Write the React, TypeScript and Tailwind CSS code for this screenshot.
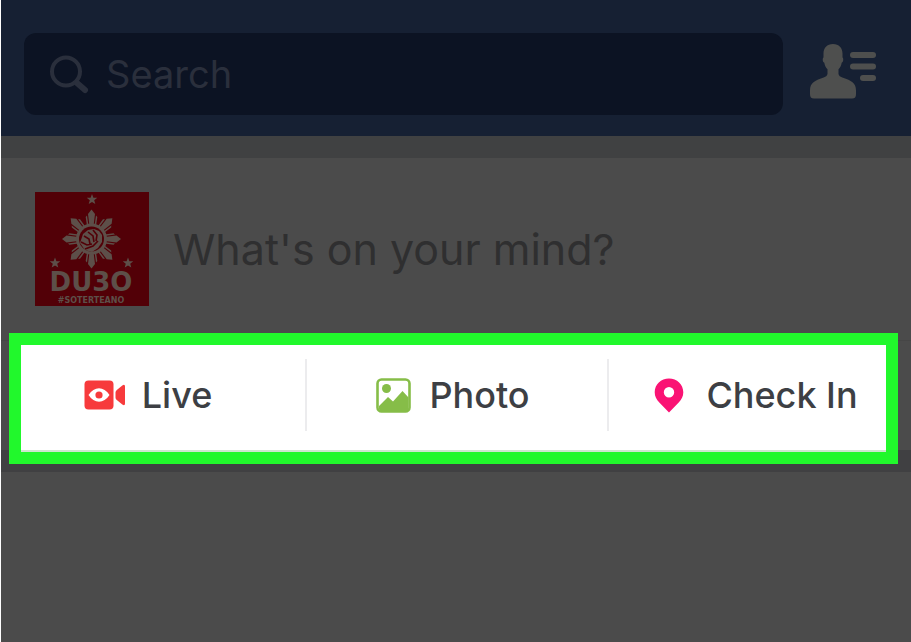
import React from "react";

function ContactsIcon() {
  return (
    <svg viewBox="0 0 66 56" className="h-14 w-[66px]" fill="#4e4f4e" aria-hidden="true">
      <path d="M23 1c-6 0-9.500 4-9.500 9.500v4c-1.200.6-1 4.500.8 5.200.5 2.800 1.500 5 3.200 6.500v4.500c0 2-2 3-4.500 4C5 37.500 0 39.500 0 47.500V51c0 3 1 4.500 4 4.500h38c3 0 4-1.500 4-4.500v-3.500c0-8-5-10-13-12.800-2.500-1-4.500-2-4.500-4v-4.500c1.700-1.500 2.700-3.700 3.200-6.500 1.800-.7 2-4.600.8-5.200v-4C32.500 5 29 1 23 1z" />
      <rect x="40" y="9" width="26" height="6" rx="3" />
      <rect x="40" y="20.500" width="26" height="6" rx="3" />
      <rect x="50" y="32" width="16" height="6" rx="3" />
    </svg>
  );
}

function SearchIcon() {
  return (
    <svg viewBox="0 0 40 40" className="size-10 shrink-0" fill="none" stroke="#2a2f3c" aria-hidden="true">
      <circle cx="16" cy="17.500" r="14" strokeWidth="4" />
      <path d="M27 29l8 7" strokeWidth="6" strokeLinecap="round" />
    </svg>
  );
}

function LiveIcon() {
  return (
    <svg viewBox="0 0 42 30" className="h-[30px] w-[42px] shrink-0" aria-hidden="true">
      <rect x="0.500" y="0.500" width="29" height="29" rx="4" fill="#f73a3c" />
      <path d="M31.500 12.500q0-1.500 1.300-2.500l5.500-4.500q2.700-1.800 2.700 1v17q0 2.800-2.700 1l-5.500-4.500q-1.300-1-1.300-2.500z" fill="#f73a3c" />
      <path d="M4.500 15C7.500 10.500 11 8.200 15 8.200S22.500 10.500 25.500 15C22.500 19.500 19 21.800 15 21.800S7.500 19.500 4.500 15z" fill="#fff" />
      <circle cx="15" cy="15" r="3.600" fill="#f73a3c" />
    </svg>
  );
}

function PhotoIcon() {
  return (
    <svg viewBox="0 0 35 35" className="size-[35px] shrink-0" aria-hidden="true">
      <rect x="1.500" y="1.500" width="32" height="32" rx="4" fill="#fff" stroke="#86bd48" strokeWidth="2.600" />
      <circle cx="10.500" cy="10.500" r="4.500" fill="#86bd48" />
      <path d="M3 28l9-9 5 4.500L26.500 13l6 6.500V31q0 2-2 2H5q-2 0-2-2z" fill="#86bd48" />
    </svg>
  );
}

function PinIcon() {
  return (
    <svg viewBox="0 0 30 35" className="h-[35px] w-[30px] shrink-0" aria-hidden="true">
      <path
        fillRule="evenodd"
        fill="#fa1374"
        d="M15 .5C7 .5.7 6.500.7 14.300c0 4.200 1.800 7.200 4.600 10.200L15 34.500l9.700-10c2.800-3 4.600-6 4.600-10.200C29.300 6.500 23 .5 15 .5zm0 8.500a5.200 5.200 0 1 1 0 10.400A5.200 5.200 0 0 1 15 9z"
      />
    </svg>
  );
}

const STAR = "M0-5.500L1.400-1.800 5.300-1.700 2.200.8 3.300 4.600 0 2.400-3.300 4.600-2.200.8-5.300-1.700-1.400-1.800z";

function Avatar() {
  return (
    <svg viewBox="0 0 114 114" className="size-[114px] shrink-0" role="img" aria-label="Profile picture">
      <rect width="114" height="114" fill="#520007" />
      <g fill="#5d4f49">
        <path d={STAR} transform="translate(57 7.500)" />
        <path d={STAR} transform="translate(20 71)" />
        <path d={STAR} transform="translate(93 71)" />
        {[0, 45, 90, 135, 180, 225, 270, 315].map((a) => (
          <g key={a} transform={`translate(56.500 47) rotate(${a})`}>
            <path d="M-2-13L-3.500-25 0-29.500 3.500-25 2-13z" />
            <path d="M-4.500-13L-5.800-22-4.500-23.500-3-13zM4.500-13L5.800-22 4.500-23.500 3-13z" />
          </g>
        ))}
        <circle cx="56.500" cy="47" r="15.500" />
      </g>
      <circle cx="56.500" cy="47" r="12.500" fill="#520007" />
      <path d="M45 51l3-9 5-4 6-1 5 2 3 4v7l-4 6-6 4-7-2z" fill="#5d4f49" />
      <path
        d="M49 44l5 3 1 5M53 40l5 4 1 6M58 38l4 5-1 6M46 50l6 3 5-1M50 57l8-3 5-5"
        fill="none"
        stroke="#520007"
        strokeWidth="1.600"
      />
      <text x="56" y="99" textAnchor="middle" fill="#5d4f49" className="font-['DejaVu_Sans',sans-serif] text-[26px] font-bold">
        DU3O
      </text>
      <text x="56" y="111" textAnchor="middle" fill="#5d4f49" className="font-['DejaVu_Sans',sans-serif] text-[8px] font-bold">
        #SOTERTEANO
      </text>
    </svg>
  );
}

export default function App() {
  return (
    <div className="min-h-screen bg-white pl-px font-['Inter','Liberation_Sans',sans-serif]">
      <div className="min-h-screen bg-[#4b4b4b]">
        <header className="flex items-start gap-[27px] bg-[#162033] pt-[33px] pr-[35px] pb-[21px] pl-[23px]">
          <label className="flex h-[82px] min-w-0 flex-1 items-center gap-4 rounded-xl bg-[#0c1323] pl-[26px]">
            <SearchIcon />
            <input
              type="search"
              aria-label="Search"
              placeholder="Search"
              className="min-w-0 flex-1 bg-transparent text-[38px] text-[#2a2f3c] outline-none placeholder:text-[#2a2f3c]"
            />
          </label>
          <button type="button" aria-label="Contacts" className="pt-2.5">
            <ContactsIcon />
          </button>
        </header>

        <div className="h-[22px] bg-[#404142]" />

        <main>
          <section className="flex items-center gap-6 px-[34px] pt-[34px] pb-[34px]">
            <Avatar />
            <input
              type="text"
              aria-label="What's on your mind?"
              placeholder="What's on your mind?"
              className="min-w-0 flex-1 bg-transparent text-[43px] text-[#2f2f30] outline-none placeholder:text-[#2f2f30]"
            />
          </section>

          <section className="relative border-t border-[#464646] pl-1">
            <div className="absolute -top-[8px] right-[13px] -bottom-[14px] left-[8px] border-[12px] border-[#21f82c] bg-white">
              <div className="absolute inset-x-0 bottom-0 h-0.5 bg-[#cfe5cf]" />
            </div>
            <div className="relative grid grid-cols-3 pt-[18px] pb-[19px] text-[36px] leading-[72px] font-medium text-[#3d3f44]">
              <button type="button" className="flex items-center justify-center gap-4 border-r-2 border-[#ececee] pr-3.5">
                <LiveIcon />
                Live
              </button>
              <button type="button" className="flex items-center justify-center gap-[18px] border-r-2 border-[#ececee] pr-2">
                <PhotoIcon />
                Photo
              </button>
              <button type="button" className="flex items-center justify-center gap-[22px] pr-2">
                <PinIcon />
                Check In
              </button>
            </div>
          </section>

          <div className="h-[22px] bg-[#404042]" />
        </main>
      </div>
    </div>
  );
}
